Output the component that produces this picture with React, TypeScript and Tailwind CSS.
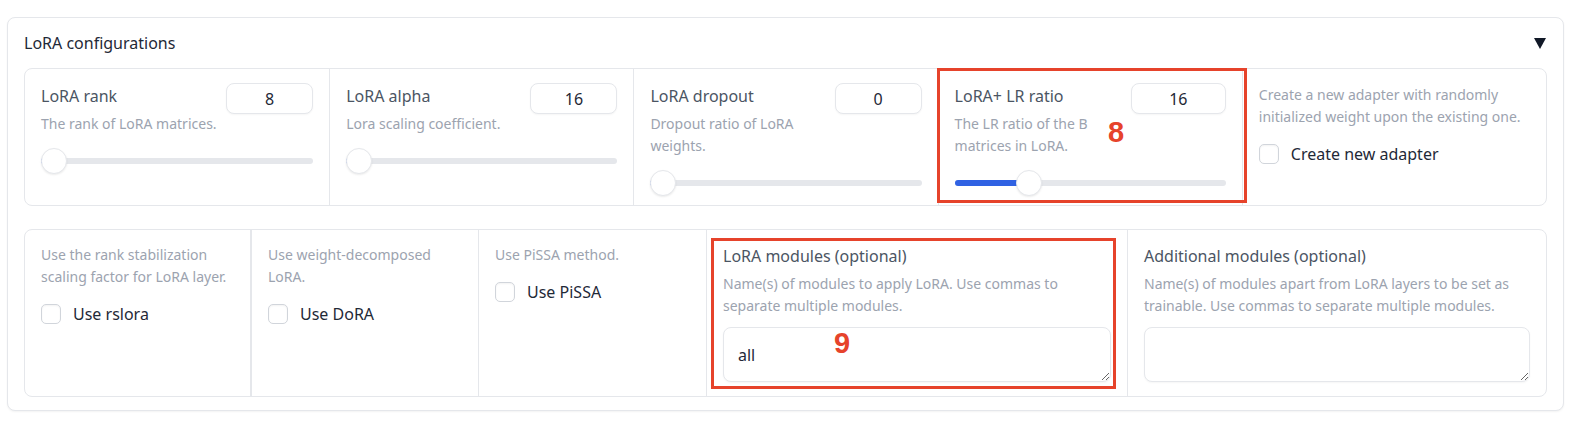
import type { ReactNode } from "react";

const FONT = "font-['Noto_Sans','Open_Sans',sans-serif]";

type SliderProps = {
  label: string;
  info: string;
  value: string;
  fill: number;
  inputWidth: string;
  first?: boolean;
};

function Slider({ fill }: { fill: number }) {
  return (
    <div className="relative mt-[13px] flex h-[26px] items-center">
      <div className="relative h-[6px] w-full rounded-full bg-[#e5e7eb]">
        <div
          className="absolute left-0 top-0 h-[6px] rounded-full bg-[#3062e3]"
          style={{ width: `calc(13px + ${fill} * (100% - 26px))` }}
        />
      </div>
      <div
        className="absolute top-0 h-[26px] w-[26px] rounded-full border border-[#e5e7eb] bg-white shadow-[0_1px_2px_rgba(0,0,0,0.08)]"
        style={{ left: `calc(${fill} * (100% - 26px))` }}
      />
    </div>
  );
}

function SliderCell({ label, info, value, fill, inputWidth, first }: SliderProps) {
  return (
    <div className={`px-4 pt-[14px] ${first ? "" : "border-l border-[#e5e7eb]"}`}>
      <div className="flex items-start justify-between">
        <div className="min-w-0">
          <div className="text-[16px] leading-[26px] text-[#4b5563]">{label}</div>
          <div className="mt-[4px] text-[14px] leading-[22px] text-[#9ca3af]">{info}</div>
        </div>
        <input
          type="text"
          defaultValue={value}
          className={`${inputWidth} h-[31px] shrink-0 rounded-lg border border-[#e5e7eb] bg-white text-center text-[16px] text-[#1f2937] shadow-[0_1px_2px_rgba(0,0,0,0.04)] outline-none`}
        />
      </div>
      <Slider fill={fill} />
    </div>
  );
}

function Check({ label }: { label: string }) {
  return (
    <label className="flex items-center gap-3">
      <span className="h-5 w-5 shrink-0 rounded-[5px] border border-[#d1d5db] bg-white shadow-[inset_0_1px_2px_rgba(0,0,0,0.05)]" />
      <span className="text-[16px] leading-6 text-[#1f2937]">{label}</span>
    </label>
  );
}

function CheckCell({ info, label, className }: { info: ReactNode; label: string; className: string }) {
  return (
    <div className={`px-4 pt-[14px] ${className}`}>
      <div className="text-[14px] leading-[22px] text-[#9ca3af]">{info}</div>
      <div className="mt-[14px]">
        <Check label={label} />
      </div>
    </div>
  );
}

function TextCell({ label, info, value, className }: { label: string; info: string; value: string; className: string }) {
  return (
    <div className={`px-4 pt-[13px] ${className}`}>
      <div className="text-[16px] leading-[26px] text-[#4b5563]">{label}</div>
      <div className="mt-[4px] text-[14px] leading-[22px] text-[#9ca3af]">{info}</div>
      <textarea
        defaultValue={value}
        className="mt-[10px] block h-[55px] w-full resize-y rounded-lg border border-[#e5e7eb] bg-white px-[14px] pt-[15px] text-[16px] leading-6 text-[#1f2937] shadow-[0_1px_2px_rgba(0,0,0,0.04)] outline-none"
      />
    </div>
  );
}

export default function App() {
  return (
    <div className={`relative h-[422px] w-[1578px] bg-white ${FONT}`}>
      <div className="ml-[7px] pt-[17px]">
        <div className="h-[394px] w-[1557px] rounded-lg border border-[#e5e7eb] bg-white px-4 shadow-[0_1px_2px_rgba(0,0,0,0.05)]">
          <div className="flex h-[50px] items-center justify-between">
            <span className="text-[16px] text-[#1f2937]">LoRA configurations</span>
            <svg width="12" height="12" viewBox="0 0 12 12" className="mr-[1px]">
              <polygon points="0,1 12,1 6,12" fill="#111827" />
            </svg>
          </div>

          <div className="grid h-[138px] grid-cols-5 rounded-lg border border-[#e5e7eb]">
            <SliderCell first label="LoRA rank" info="The rank of LoRA matrices." value="8" fill={0} inputWidth="w-[87px]" />
            <SliderCell label="LoRA alpha" info="Lora scaling coefficient." value="16" fill={0} inputWidth="w-[87px]" />
            <SliderCell label="LoRA dropout" info="Dropout ratio of LoRA weights." value="0" fill={0} inputWidth="w-[87px]" />
            <SliderCell label="LoRA+ LR ratio" info="The LR ratio of the B matrices in LoRA." value="16" fill={0.25} inputWidth="w-[95px]" />
            <div className="border-l border-[#e5e7eb] px-4 pt-[15px]">
              <div className="text-[14px] leading-[22px] text-[#9ca3af]">
                Create a new adapter with randomly initialized weight upon the existing one.
              </div>
              <div className="mt-[14px]">
                <Check label="Create new adapter" />
              </div>
            </div>
          </div>

          <div className="mt-[23px] grid h-[168px] grid-cols-[225px_228px_228px_421px_1fr] rounded-lg border border-[#e5e7eb]">
            <CheckCell className="" info="Use the rank stabilization scaling factor for LoRA layer." label="Use rslora" />
            <CheckCell className="border-l-2 border-[#e5e7eb]" info="Use weight-decomposed LoRA." label="Use DoRA" />
            <CheckCell className="border-l border-[#e5e7eb]" info="Use PiSSA method." label="Use PiSSA" />
            <TextCell
              className="border-l border-[#e5e7eb]"
              label="LoRA modules (optional)"
              info="Name(s) of modules to apply LoRA. Use commas to separate multiple modules."
              value="all"
            />
            <TextCell
              className="border-l border-[#e5e7eb]"
              label="Additional modules (optional)"
              info="Name(s) of modules apart from LoRA layers to be set as trainable. Use commas to separate multiple modules."
              value=""
            />
          </div>
        </div>
      </div>

      {/* annotation overlays */}
      <div className="absolute left-[937px] top-[68px] h-[135px] w-[310px] border-[3px] border-[#e6432b]" />
      <div className="absolute left-[1108px] top-[118px] font-['Liberation_Sans',sans-serif] text-[29px] font-bold leading-none text-[#e6432b]">
        8
      </div>
      <div className="absolute left-[711px] top-[238px] h-[151px] w-[405px] border-[3px] border-[#e6432b]" />
      <div className="absolute left-[834px] top-[329px] font-['Liberation_Sans',sans-serif] text-[29px] font-bold leading-none text-[#e6432b]">
        9
      </div>
    </div>
  );
}
